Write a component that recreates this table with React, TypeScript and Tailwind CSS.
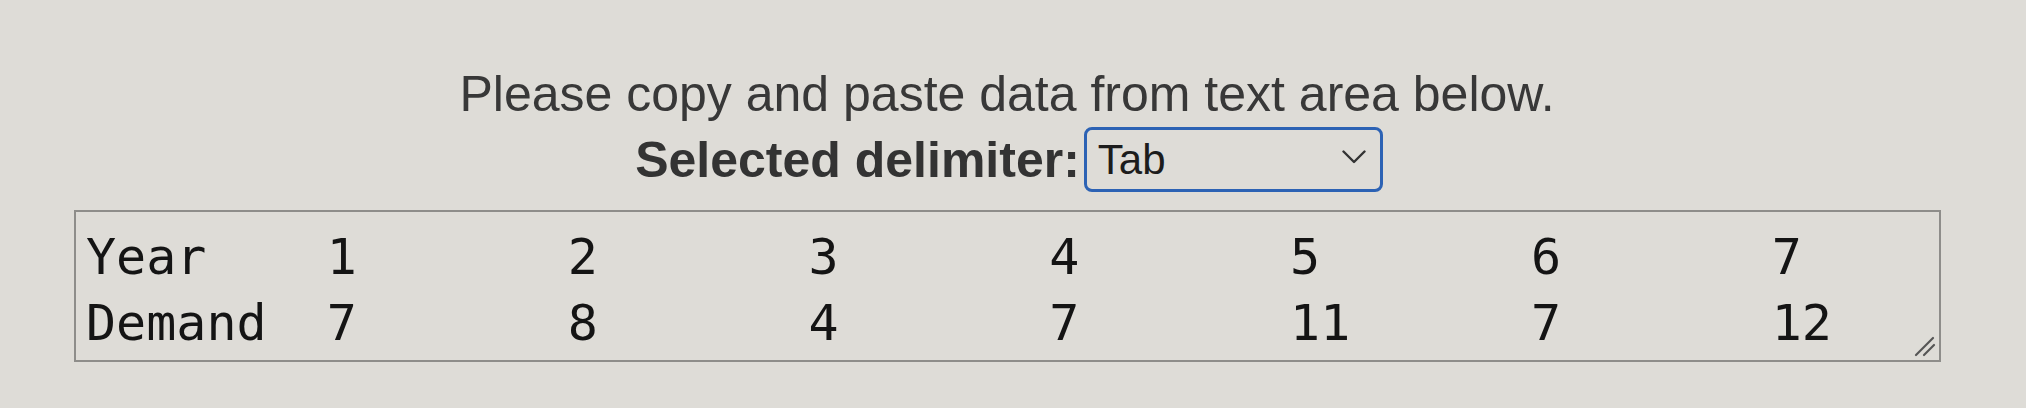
import React from "react";

const DATA = "Year\t1\t2\t3\t4\t5\t6\t7\nDemand\t7\t8\t4\t7\t11\t7\t12";

export default function App() {
  return (
    <div className="w-[2026px] h-[408px] overflow-hidden bg-[#dedcd7] flex flex-col">
      <div className="flex flex-col items-center pt-[66px] pr-[12px]">
        <div
          className="text-[50px] leading-[57px] text-[#383838] whitespace-nowrap"
          style={{ fontFamily: '"Liberation Sans", Arial, sans-serif' }}
        >
          Please copy and paste data from text area below.
        </div>
        <div className="flex items-center mt-[4px] pl-[4px]">
          <span
            className="text-[50px] leading-[56px] font-bold text-[#333333] whitespace-nowrap"
            style={{ fontFamily: '"Liberation Sans", Arial, sans-serif' }}
          >
            Selected delimiter:
          </span>
          <div className="ml-[4px] w-[299px] h-[65px] border-[3px] border-[#2c62b4] rounded-[8px] flex items-center justify-between pl-[11px] pr-[14px]">
            <span
              className="text-[42px] leading-none text-[#1c1c1c]"
              style={{ fontFamily: '"Liberation Sans", Arial, sans-serif' }}
            >
              Tab
            </span>
            <svg width="24" height="14" viewBox="0 0 24 14" className="mt-[-6px]">
              <path d="M1.5 1.5 L12 12 L22.5 1.5" fill="none" stroke="#333333" strokeWidth="2.4" strokeLinecap="round" strokeLinejoin="round" />
            </svg>
          </div>
        </div>
      </div>
      <div className="mt-[18px] ml-[74px] relative w-[1867px]">
        <textarea
          readOnly
          defaultValue={DATA}
          className="block w-[1867px] h-[152px] border-2 border-[#8e8d8a] bg-transparent pl-[10px] pt-[12px] text-[50px] leading-[66px] text-[#141414] overflow-hidden outline-none resize-none"
          style={{ fontFamily: '"DejaVu Sans Mono", monospace', tabSize: 8 }}
        />
        <svg width="24" height="22" viewBox="0 0 24 22" className="absolute right-[4px] bottom-[5px]">
          <path d="M3 20 L20 3" stroke="#555555" strokeWidth="2.2" strokeLinecap="round" />
          <path d="M11 20 L21 10" stroke="#555555" strokeWidth="2.2" strokeLinecap="round" />
        </svg>
      </div>
    </div>
  );
}
